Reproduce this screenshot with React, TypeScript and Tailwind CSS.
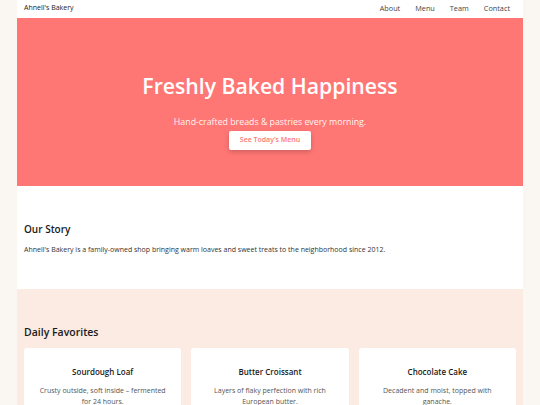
const links = ["About", "Menu", "Team", "Contact"]

const favorites = [
  { name: "Sourdough Loaf", text: "Crusty outside, soft inside – fermented for 24 hours." },
  { name: "Butter Croissant", text: "Layers of flaky perfection with rich European butter." },
  { name: "Chocolate Cake", text: "Decadent and moist, topped with ganache." },
]

export default function App() {
  return (
    <div className="min-h-screen bg-[#faf6f2] font-['Open_Sans',sans-serif] text-[#222]">
      <div className="mx-auto w-[506px] bg-white">
        {/* Top nav */}
        <nav className="flex h-[18px] items-center justify-between pb-[2px] pl-[7px] pr-[13px] text-[7px]">
          <span className="text-[#222]">Ahnell&apos;s Bakery</span>
          <div className="flex gap-[15px] text-[7.3px] text-[#444]">
            {links.map((l) => (
              <a key={l} href="#">
                {l}
              </a>
            ))}
          </div>
        </nav>

        {/* Hero */}
        <section className="flex h-[168px] flex-col items-center bg-[#ff7775] pt-[54px] text-white">
          <h1 className="text-[21.2px] font-semibold leading-[28px]">Freshly Baked Happiness</h1>
          <p className="mt-[15px] text-[8.8px] leading-[14px] text-white/95">
            Hand-crafted breads &amp; pastries every morning.
          </p>
          <a
            href="#"
            className="mt-[2px] flex h-[19px] w-[82px] items-center justify-center rounded-[2px] bg-white text-[7px] font-semibold text-[#ff7775] shadow-[0_2px_5px_rgba(0,0,0,0.2)]"
          >
            See Today&apos;s Menu
          </a>
        </section>

        {/* Our story */}
        <section className="h-[103px] px-[7px] pt-[34px]">
          <h2 className="text-[10px] font-semibold leading-[18px] text-[#1a1a1a]">Our Story</h2>
          <p className="mt-[6px] text-[7px] leading-[12px] text-[#333]">
            Ahnell&apos;s Bakery is a family-owned shop bringing warm loaves and sweet treats to the neighborhood since 2012.
          </p>
        </section>

        {/* Daily favorites */}
        <section className="bg-[#fbebe2] px-[7px] pb-[20px] pt-[34px]">
          <h2 className="mb-[7px] text-[10.5px] font-semibold leading-[18px] text-[#1a1a1a]">Daily Favorites</h2>
          <div className="grid grid-cols-3 gap-[10px]">
            {favorites.map((f) => (
              <div key={f.name} className="rounded-[3px] bg-white px-[12px] pb-[16px] pt-[18px] text-center">
                <h3 className="text-[8px] font-semibold leading-[12px] text-[#1a1a1a]">{f.name}</h3>
                <p className="mt-[8px] text-[7px] leading-[10.5px] text-[#555]">{f.text}</p>
              </div>
            ))}
          </div>
        </section>
      </div>
    </div>
  )
}
